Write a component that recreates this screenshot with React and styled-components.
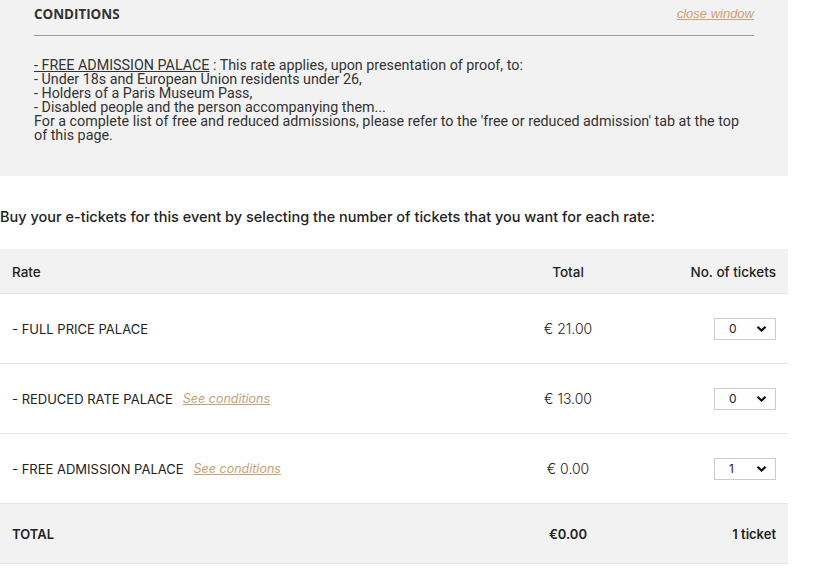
import React from "react"
import styled, { createGlobalStyle } from "styled-components"

const GlobalStyle = createGlobalStyle`
  body {
    margin: 0;
    background: #fff;
    font-family: Inter, "Liberation Sans", sans-serif;
    color: #222;
  }
`

const rates = [
  { name: "- FULL PRICE PALACE", price: "€ 21.00", qty: "0" },
  { name: "- REDUCED RATE PALACE", price: "€ 13.00", qty: "0", conditions: true },
  { name: "- FREE ADMISSION PALACE", price: "€ 0.00", qty: "1", conditions: true },
]

const Chevron = () => (
  <svg width="11" height="8" viewBox="0 0 11 8">
    <path d="M1.5 1.8 L5.5 5.6 L9.5 1.8" fill="none" stroke="#111" strokeWidth="2.2" />
  </svg>
)

const App = () => {
  return (
    <Page>
      <GlobalStyle />
      <Conditions>
        <CondHead>
          <CondTitle>CONDITIONS</CondTitle>
          <CloseLink href="#">close window</CloseLink>
        </CondHead>
        <CondText>
          <u>- FREE ADMISSION PALACE</u> : This rate applies, upon presentation of proof, to:
          <br />- Under 18s and European Union residents under 26,
          <br />- Holders of a Paris Museum Pass,
          <br />- Disabled people and the person accompanying them...
          <br />For a complete list of free and reduced admissions, please refer to the 'free or reduced admission' tab at the top of this page.
        </CondText>
      </Conditions>

      <Intro>Buy your e-tickets for this event by selecting the number of tickets that you want for each rate:</Intro>

      <Table>
        <HeadRow>
          <Cell>Rate</Cell>
          <Cell $align="center">Total</Cell>
          <Cell $align="right">No. of tickets</Cell>
        </HeadRow>
        {rates.map((r) => (
          <Row key={r.name}>
            <Cell>
              {r.name}
              {r.conditions && <SeeLink href="#">See conditions</SeeLink>}
            </Cell>
            <Price>{r.price}</Price>
            <Cell $align="right">
              <Select>
                <span>{r.qty}</span>
                <Chevron />
              </Select>
            </Cell>
          </Row>
        ))}
        <TotalRow>
          <Cell>TOTAL</Cell>
          <Cell $align="center">€0.00</Cell>
          <Cell $align="right">1 ticket</Cell>
        </TotalRow>
      </Table>
    </Page>
  )
}

const Page = styled.div`
  width: 788px;
`

const Conditions = styled.div`
  background: #f2f2f2;
  padding: 5px 34px 0;
  height: 176px;
  box-sizing: border-box;
`

const CondHead = styled.div`
  display: flex;
  justify-content: space-between;
  align-items: flex-start;
  height: 30px;
  border-bottom: 1px solid #999;
`

const CondTitle = styled.div`
  font-family: "Open Sans", sans-serif;
  font-weight: 700;
  font-size: 13.4px;
  line-height: 18px;
  color: #333;
`

const CloseLink = styled.a`
  font-family: "Liberation Sans", Arial, sans-serif;
  font-style: italic;
  font-size: 13px;
  line-height: 18px;
  color: #c8a373;
  text-decoration: underline;
`

const CondText = styled.p`
  margin: 22px 0 0;
  font-family: Roboto, sans-serif;
  font-size: 14.3px;
  line-height: 14px;
  color: #333;
  u {
    text-decoration-thickness: 1px;
  }
`

const Intro = styled.h2`
  margin: 32px 0 24px;
  font-size: 14.5px;
  font-weight: 500;
  color: #222;
`

const Table = styled.div`
  display: flex;
  flex-direction: column;
`

const Row = styled.div`
  display: grid;
  grid-template-columns: 1fr 120px 148px;
  align-items: center;
  height: 70px;
  box-sizing: border-box;
  padding: 0 12px;
  border-bottom: 1px solid #e6e6e6;
  font-size: 13px;
  color: #222;
`

const HeadRow = styled(Row)`
  height: 45px;
  padding-top: 1px;
  background: #f2f2f2;
  font-weight: 500;
  font-size: 13.5px;
`

const TotalRow = styled(Row)`
  height: 60px;
  background: #f2f2f2;
  font-weight: 600;
`

const Cell = styled.div`
  display: flex;
  align-items: center;
  justify-content: ${(p) =>
    p.$align === "center" ? "center" : p.$align === "right" ? "flex-end" : "flex-start"};
`

const Price = styled(Cell).attrs({ $align: "center" })`
  font-size: 14px;
  font-weight: 300;
`

const SeeLink = styled.a`
  margin-left: 10px;
  font-style: italic;
  font-size: 12.5px;
  color: #c4a274;
  text-decoration: underline;
`

const Select = styled.div`
  width: 62px;
  height: 22px;
  box-sizing: border-box;
  border: 1px solid #ccc;
  display: flex;
  align-items: center;
  justify-content: space-between;
  padding: 0 8px 0 14px;
  font-size: 12px;
  background: #fff;
`

export default App
